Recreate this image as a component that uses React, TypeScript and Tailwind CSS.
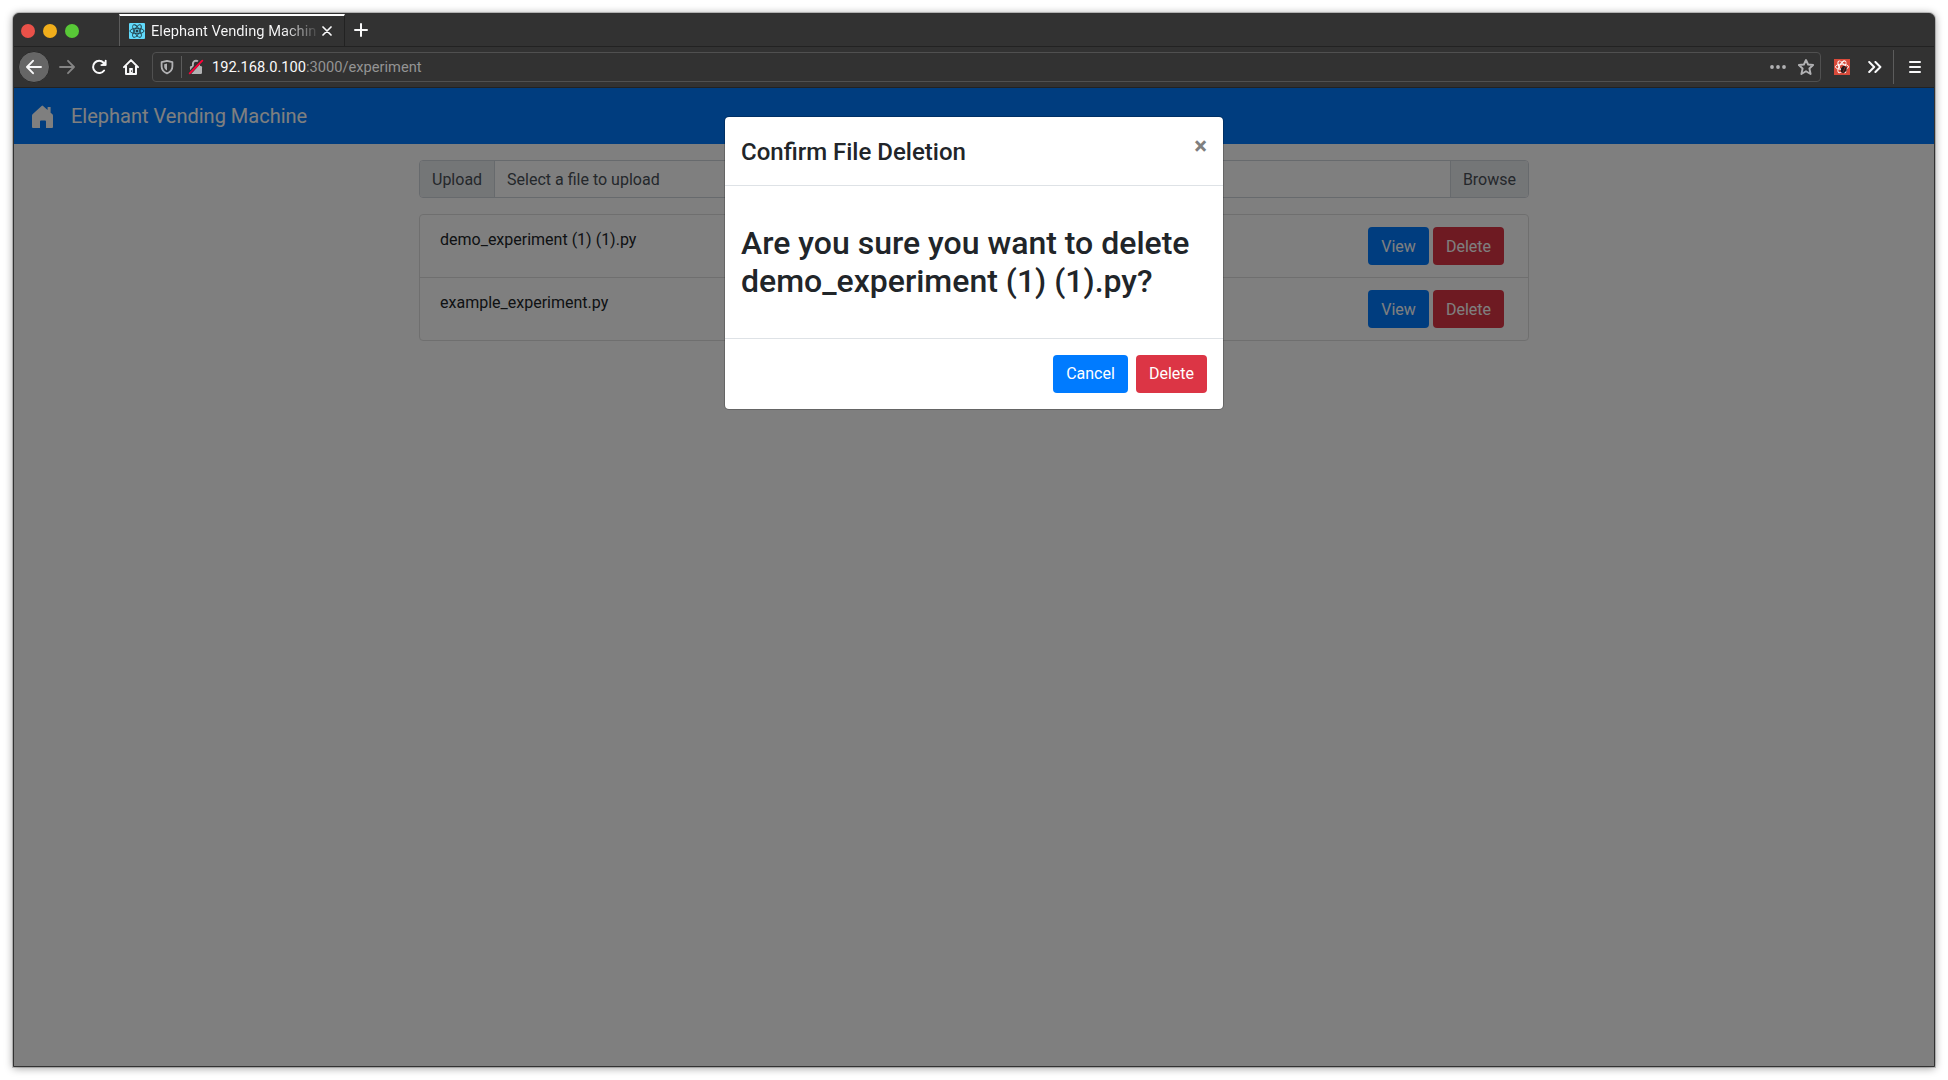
import type { ReactNode } from "react";

const experiments = ["demo_experiment (1) (1).py", "example_experiment.py"];

function Button({ tone, className = "", children }: { tone: "primary" | "danger"; className?: string; children: ReactNode }) {
  const color = tone === "primary" ? "bg-[#007bff]" : "bg-[#dc3545]";
  return (
    <button className={`h-[38px] shrink-0 rounded text-center text-base leading-6 text-white ${color} ${className}`}>
      {children}
    </button>
  );
}

function ReactFavicon() {
  return (
    <svg viewBox="0 0 16 16" className="size-4 shrink-0">
      <rect width="16" height="16" rx="1" fill="#61dafb" />
      <g fill="none" stroke="#20404b" strokeWidth="0.9">
        <ellipse cx="8" cy="8" rx="7" ry="2.7" />
        <ellipse cx="8" cy="8" rx="7" ry="2.7" transform="rotate(60 8 8)" />
        <ellipse cx="8" cy="8" rx="7" ry="2.7" transform="rotate(120 8 8)" />
      </g>
      <circle cx="8" cy="8" r="1.5" fill="#20404b" />
    </svg>
  );
}

function TabStrip() {
  return (
    <div className="flex h-[33px] shrink-0 border-b border-[#222222]">
      <div className="flex w-[105px] items-center gap-2 pl-[7px] pt-px">
        <span className="size-[14px] rounded-full bg-[#ea5149]" />
        <span className="size-[14px] rounded-full bg-[#f1ae1b]" />
        <span className="size-[14px] rounded-full bg-[#58c837]" />
      </div>
      <div className="flex w-[226px] items-center border-l border-r border-t-2 border-l-[#5c5c5c] border-r-[#222222] border-t-white pl-[9px]">
        <ReactFavicon />
        <span className="ml-1.5 w-[166px] overflow-hidden whitespace-nowrap bg-linear-to-r from-[#f9f9fa] from-80% to-[#f9f9fa]/10 bg-clip-text text-[14.67px] leading-5 text-transparent">
          Elephant Vending Machin
        </span>
        <svg viewBox="0 0 10 10" className="ml-[5px] size-[10px]" fill="none" stroke="#f9f9fa" strokeWidth="1.7" strokeLinecap="round">
          <path d="M1 1L9 9M9 1L1 9" />
        </svg>
      </div>
      <svg viewBox="0 0 14 14" className="ml-[9px] mt-[9px] size-[14px]" fill="none" stroke="#f9f9fa" strokeWidth="2" strokeLinecap="round">
        <path d="M7 1V13M1 7H13" />
      </svg>
    </div>
  );
}

function AddressBar() {
  return (
    <div className="flex h-[30px] w-[1669px] items-center rounded border border-[#505050] pl-1.5">
      <svg viewBox="0 0 16 16" className="size-4" fill="none" stroke="#b1b1b3">
        <path d="M8 1.8L13.4 3.2V7.2C13.4 10.8 11.2 13 8 14.3C4.8 13 2.6 10.8 2.6 7.2V3.2Z" strokeWidth="1.8" strokeLinejoin="round" />
        <path d="M8 4.5L5.2 5.2V7.6C5.2 9.4 6.2 10.7 8 11.6Z" fill="#b1b1b3" stroke="none" />
      </svg>
      <span className="ml-1.5 h-[22px] w-px bg-[#5c5c5c]" />
      <svg viewBox="0 0 16 16" className="ml-1.5 size-4">
        <path d="M4.9 8V5A3.1 3.3 0 0 1 11.1 5V8" fill="none" stroke="#b1b1b3" strokeWidth="1.9" />
        <rect x="2" y="7" width="12" height="8" rx="1.2" fill="#b1b1b3" />
        <path d="M0.8 15.2L13.8 0.6" stroke="#323232" strokeWidth="3.4" />
        <path d="M1.7 14.3L14.3 1.7" stroke="#ff0039" strokeWidth="1.9" strokeLinecap="round" />
      </svg>
      <span className="ml-2 whitespace-nowrap text-[14.67px] leading-5 text-[#f9f9fa]">
        192.168.0.100<span className="text-[#949494]">:3000/experiment</span>
      </span>
      <svg viewBox="0 0 16 4" className="ml-auto h-1 w-4 fill-[#b1b1b3]">
        <circle cx="2" cy="2" r="1.9" />
        <circle cx="8" cy="2" r="1.9" />
        <circle cx="14" cy="2" r="1.9" />
      </svg>
      <svg viewBox="0 0 16 16" className="ml-3 mr-1.5 size-4" fill="none" stroke="#b1b1b3" strokeWidth="1.9" strokeLinejoin="round">
        <path d="M8 1L10.1 5.5L15.1 6L11.4 9.5L12.6 15L8 12.2L3.4 15L4.6 9.5L0.9 6L5.9 5.5Z" />
      </svg>
    </div>
  );
}

function Toolbar() {
  return (
    <div className="flex h-[41px] shrink-0 items-center border-b border-[#222222] pl-1">
      <span className="flex size-8 items-center justify-center rounded-full border border-[#2a2a2a] bg-[#666666]">
        <svg viewBox="0 0 16 16" className="size-4" fill="none" stroke="#f9f9fa" strokeWidth="1.9" strokeLinecap="round" strokeLinejoin="round">
          <path d="M15 8H1.2M7 1.8L1 8L7 14.2" />
        </svg>
      </span>
      <svg viewBox="0 0 16 16" className="ml-[9px] size-4" fill="none" stroke="#858585" strokeWidth="1.8" strokeLinecap="round" strokeLinejoin="round">
        <path d="M1 8H14.8M9 1.8L15 8L9 14.2" />
      </svg>
      <svg viewBox="0 0 16 16" className="ml-4 size-4" fill="none" stroke="#f9f9fa" strokeWidth="2" strokeLinecap="round">
        <path d="M13.1 11.5A6.1 6.1 0 1 1 12.6 3.7" />
        <path d="M15.3 1V6.7H9.5Z" fill="#f9f9fa" stroke="none" />
        <path d="M14.6 1.5V6H10.2" strokeWidth="1.6" strokeLinejoin="round" />
      </svg>
      <svg viewBox="0 0 16 16" className="ml-4 size-4" fill="none" stroke="#f9f9fa" strokeWidth="2" strokeLinecap="round" strokeLinejoin="round">
        <path d="M1 8.1L8 1.1L15 8.1M3 7.2V15H13V7.2" />
        <path d="M6.2 15V9H9.8V15Z" fill="#f9f9fa" stroke="none" />
        <path d="M8.5 11.8V12.4" stroke="#323232" strokeWidth="1" />
      </svg>
      <div className="ml-[13px]">
        <AddressBar />
      </div>
      <svg viewBox="0 0 16 16" className="ml-[13px] size-4">
        <rect width="16" height="16" fill="#d94a3a" />
        <g fill="none" stroke="#fff" strokeWidth="0.95">
          <ellipse cx="8" cy="7.8" rx="6.6" ry="2.6" />
          <ellipse cx="8" cy="7.8" rx="6.6" ry="2.6" transform="rotate(60 8 7.8)" />
          <ellipse cx="8" cy="7.8" rx="6.6" ry="2.6" transform="rotate(120 8 7.8)" />
        </g>
        <ellipse cx="9.7" cy="10.4" rx="2.7" ry="3.6" transform="rotate(28 9.7 10.4)" fill="#24191a" />
        <path d="M6.5 9L12.8 12M7 12.5L12.5 8.5M10.5 9L8.5 13.5" stroke="#24191a" strokeWidth="0.9" />
        <path d="M11.5 7.2L9 13" stroke="#b33b30" strokeWidth="0.6" />
      </svg>
      <svg viewBox="0 0 14 12" className="ml-[18px] h-3 w-[14px]" fill="none" stroke="#f9f9fa" strokeWidth="2" strokeLinecap="round" strokeLinejoin="round">
        <path d="M1.2 1L6.2 6L1.2 11M7.4 1L12.4 6L7.4 11" />
      </svg>
      <span className="ml-[11px] h-[34px] w-px bg-[#5c5c5c]" />
      <span className="ml-[15px] flex w-3 flex-col gap-[3px]">
        <span className="h-0.5 rounded-full bg-[#f9f9fa]" />
        <span className="h-0.5 rounded-full bg-[#f9f9fa]" />
        <span className="h-0.5 rounded-full bg-[#f9f9fa]" />
      </span>
    </div>
  );
}

function Page() {
  return (
    <div className="h-full bg-white text-[#212529]">
      <nav className="flex h-14 items-center bg-[#007bff] pl-[18px] text-white">
        <svg viewBox="0 0 21 23" className="mt-px h-[23px] w-[21px] fill-white">
          <path d="M10.5 0.5L15.6 5V2H18.6V7.7L20.2 9.1Q21 9.8 21 10.8V22Q21 23 20 23H14V16.4Q14 15.4 13 15.4H9Q8 15.4 8 16.4V23H1Q0 23 0 22V10.8Q0 9.8 0.8 9.1L9.6 0.9Q10.5 0 11.4 0.9Z" />
        </svg>
        <span className="ml-[18px] text-xl">Elephant Vending Machine</span>
      </nav>
      <main className="mx-auto w-[1110px] pt-4">
        <div className="flex h-[38px] overflow-hidden rounded border border-[#ced4da] leading-6 text-[#495057]">
          <span className="border-r border-[#ced4da] bg-[#e9ecef] px-3 pt-[7px]">Upload</span>
          <span className="flex-1 px-3 pt-[7px]">Select a file to upload</span>
          <span className="border-l border-[#ced4da] bg-[#e9ecef] px-3 pt-[7px]">Browse</span>
        </div>
        <ul className="mt-4 divide-y divide-[#dfdfdf] rounded border border-[#dfdfdf]">
          {experiments.map((name) => (
            <li key={name} className="flex h-[63px] pl-5 pr-6 pt-3 last:h-[62px]">
              <span className="flex-1 pt-px">{name}</span>
              <Button tone="primary" className="w-[61px] pt-0.5">View</Button>
              <Button tone="danger" className="ml-1 w-[71px] pt-0.5">Delete</Button>
            </li>
          ))}
        </ul>
      </main>
    </div>
  );
}

function ConfirmDialog() {
  return (
    <div className="absolute inset-0 flex items-start justify-center bg-black/50 pt-7">
      <div className="w-[500px] rounded-[5px] border border-black/20 bg-white bg-clip-padding text-[#212529]">
        <div className="flex h-[69px] items-start justify-between border-b border-[#dee2e6] px-4 pt-[17px]">
          <h4 className="text-2xl leading-9 font-medium">Confirm File Deletion</h4>
          <span className="text-2xl leading-6 font-bold text-[#7f7f7f]">×</span>
        </div>
        <div className="h-[152px] px-4 pt-[38px]">
          <h2 className="text-[32px] leading-[38.4px] font-medium">
            Are you sure you want to delete demo_experiment (1) (1).py?
          </h2>
        </div>
        <div className="flex h-[71px] justify-end gap-2 border-t border-[#dee2e6] px-4 pt-4">
          <Button tone="primary" className="w-[75px]">Cancel</Button>
          <Button tone="danger" className="w-[71px]">Delete</Button>
        </div>
      </div>
    </div>
  );
}

export default function App() {
  return (
    <div className="h-[1080px] w-[1948px] overflow-hidden bg-white p-[13px] font-['Roboto',sans-serif] text-base">
      <div className="flex h-[1054px] w-[1922px] flex-col overflow-hidden rounded-t-md border border-[#323232] bg-[#323232] shadow-[0_0_0_1px_rgba(0,0,0,0.18),0_1px_9px_rgba(0,0,0,0.4)]">
        <TabStrip />
        <Toolbar />
        <div className="relative min-h-0 flex-1">
          <Page />
          <ConfirmDialog />
        </div>
      </div>
    </div>
  );
}
